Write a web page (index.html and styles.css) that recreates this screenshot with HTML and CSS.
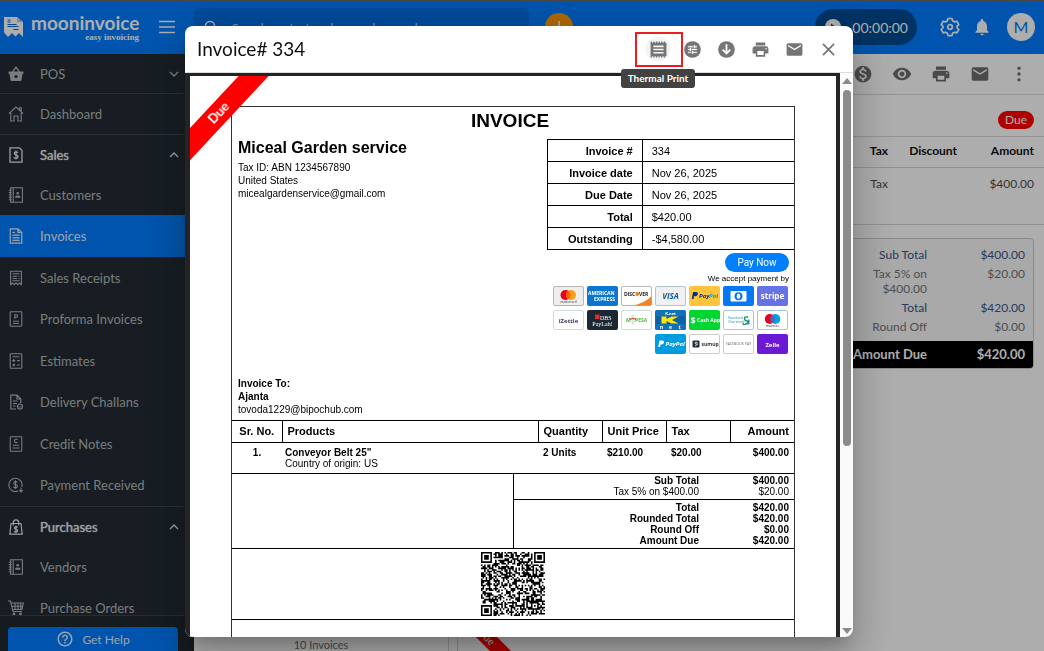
FILE: index.html
```html
<!DOCTYPE html>
<html lang="en">
<head>
<meta charset="utf-8">
<meta name="viewport" content="width=device-width, initial-scale=1">
<title>Invoice# 334</title>
<link rel="stylesheet" href="styles.css">
</head>
<body>
<svg class="sprite" aria-hidden="true">
  <symbol id="i-print" viewBox="0 0 24 24"><path d="M19 8H5c-1.66 0-3 1.34-3 3v6h4v4h12v-4h4v-6c0-1.66-1.34-3-3-3zm-3 11H8v-5h8v5zm3-7c-.55 0-1-.45-1-1s.45-1 1-1 1 .45 1 1-.45 1-1 1zm-1-9H6v4h12V3z"/></symbol>
  <symbol id="i-mail" viewBox="0 0 24 24"><path d="M20 4H4c-1.1 0-1.99.9-1.99 2L2 18c0 1.1.9 2 2 2h16c1.1 0 2-.9 2-2V6c0-1.1-.9-2-2-2zm0 4l-8 5-8-5V6l8 5 8-5v2z"/></symbol>
  <symbol id="i-book" viewBox="0 0 16 16"><g fill="none" stroke="currentColor" stroke-width="1.1"><path d="M2.6 .8H14.4V15.2H2.6zM5.2 .8V15.2M.8 3.2H3.6M.8 5.6H3.6M.8 8H3.6M.8 10.4H3.6M.8 12.8H3.6"/></g><circle cx="9.7" cy="6.3" r="1.3"/><path d="M7.2 10.8V9.6q0-1.2 2.5-1.2t2.5 1.2v1.2z"/></symbol>
  <symbol id="i-up" viewBox="0 0 10 10"><path d="M1 7l4-4 4 4" fill="none" stroke="currentColor" stroke-width="1.4"/></symbol>
  <symbol id="i-down" viewBox="0 0 10 10"><path d="M1 3l4 4 4-4" fill="none" stroke="currentColor" stroke-width="1.4"/></symbol>
</svg>

<header class="topbar">
  <div class="brand">
    <svg class="brand-mark" viewBox="0 0 21 20" aria-hidden="true"><path d="M1 0H14L20 5V20L16 16 12.500 19.500 9 16 5 20 1 15.500z" fill="#fff"/><path d="M14 0V5H20z" fill="#aacdf5"/><path d="M4.500 3h3M4.500 5h3M4.500 7.500h9M4.500 9.500h11M10.500 12.500h5" stroke="#0a66c8" stroke-width="1"/></svg>
    <div class="brand-text"><span class="brand-name">mooninvoice</span><span class="brand-tag">easy invoicing</span></div>
    <button class="bare" aria-label="Menu"><svg width="18" height="14" viewBox="0 0 18 14"><path d="M1 1.500h16M1 7h16M1 12.500h16" stroke="currentColor" stroke-width="1.300"/></svg></button>
  </div>
  <label class="search">
    <svg width="14" height="14" viewBox="0 0 14 14" aria-hidden="true"><circle cx="6" cy="6" r="4.500" fill="none" stroke="currentColor" stroke-width="1.500"/><path d="M9.500 9.500L13 13" stroke="currentColor" stroke-width="1.500"/></svg>
    <input type="text" placeholder="Search contact, order, purchase order" aria-label="Search">
  </label>
  <button class="add" aria-label="Add"><svg width="14" height="14" viewBox="0 0 14 14"><path d="M7 1v12M1 7h12" stroke="#fff" stroke-width="1.600"/></svg></button>
  <div class="top-right">
    <button class="timer"><svg width="16" height="16" viewBox="0 0 16 16" aria-hidden="true"><circle cx="8" cy="8" r="8" fill="#fff"/><path d="M6 4.500l5 3.500-5 3.500z" fill="#004b93"/></svg>00:00:00</button>
    <button class="bare" aria-label="Settings"><svg width="20" height="20" viewBox="0 0 20 20"><path d="M8 1.500h4l.6 2.300 1.900 1.100 2.300-.7 2 3.400-1.700 1.600v1.700l1.700 1.600-2 3.400-2.300-.7-1.900 1.100-.6 2.300H8l-.6-2.300-1.900-1.100-2.300.7-2-3.400 1.700-1.600V9.200L1.200 7.600l2-3.400 2.300.7 1.900-1.100z" fill="none" stroke="currentColor" stroke-width="1.700" stroke-linejoin="round"/><circle cx="10" cy="10" r="2.300" fill="none" stroke="currentColor" stroke-width="1.700"/></svg></button>
    <button class="bare" aria-label="Notifications"><svg width="20" height="20" viewBox="0 0 24 24" fill="currentColor"><path d="M12 22c1.100 0 2-.9 2-2h-4c0 1.100.89 2 2 2zm6-6v-5c0-3.070-1.640-5.640-4.500-6.320V4c0-.83-.67-1.500-1.500-1.500s-1.500.67-1.500 1.500v.68C7.630 5.360 6 7.920 6 11v5l-2 2v1h16v-1l-2-2z"/></svg></button>
    <button class="avatar" aria-label="Account">M</button>
  </div>
</header>

<div class="shell">
  <aside class="sidebar">
    <nav class="nav">
      <a class="group" href="#"><svg viewBox="0 0 16 16"><path d="M.5 5.500h15v2h-.9L13.500 14q-.2 1-1.200 1H3.700q-1 0-1.200-1L1.400 7.500H.5z"/><path d="M4.500 6L8 1.200 11.500 6" fill="none" stroke="currentColor" stroke-width="1.300"/><circle cx="8" cy="10.500" r="1.600" fill="#222c33"/></svg>POS<svg class="chev"><use href="#i-down"/></svg></a>
      <a class="group dash" href="#"><svg viewBox="0 0 16 16"><path d="M.8 7.600L8 1l7.200 6.600M2.800 6.400V15H6V10h4v5h3.200V6.400M11.500 4V1.800h1.700v3.800" fill="none" stroke="currentColor" stroke-width="1.100"/></svg>Dashboard</a>
      <a class="group open" href="#"><svg viewBox="0 0 16 16"><path d="M2 .8H11.500L14 3.500V15.200H2z" fill="none" stroke="currentColor" stroke-width="1.300"/><path d="M10 5.700Q9.500 4.800 8 4.800 6.200 4.800 6.200 6.200T8 7.900 10 9.600 8 11.200 6 10.200M8 3.500v9" fill="none" stroke="currentColor" stroke-width="1.200"/></svg>Sales<svg class="chev"><use href="#i-up"/></svg></a>
      <div class="sub">
        <a href="#"><svg><use href="#i-book"/></svg>Customers</a>
        <a class="active" href="#"><svg viewBox="0 0 16 16"><g fill="none" stroke="currentColor" stroke-width="1.200"><path d="M2.200 .8H10L13.800 4.500V15.200H2.200zM10 .8V4.500H13.800M4.500 4.500H7M4.500 7.200H11.500M4.500 9.800H11.500M4.500 12.400H11.500"/></g></svg>Invoices</a>
        <a href="#"><svg viewBox="0 0 16 16"><path d="M2.600 14.500V1.200H13.400V14.500L11.600 13 9.800 14.500 8 13 6.200 14.500 4.400 13zM4.600 3.800H11.400M4.600 6.200H9M10.300 6.200H11.400M4.600 8.500H9M10.300 8.500H11.400M4.600 10.800H11.400" fill="none" stroke="currentColor" stroke-width="1.100"/></svg>Sales Receipts</a>
        <a href="#"><svg viewBox="0 0 16 16"><path d="M3 .8H13Q13.800.8 13.800 1.600V14.400Q13.800 15.200 13 15.200H3Q2.200 15.200 2.200 14.400V1.600Q2.200.8 3 .8zM6.800 8V3.800H8.400Q9.600 3.800 9.600 5T8.400 6.200H6.800M5 10.200H11M5 12.500H11" fill="none" stroke="currentColor" stroke-width="1.100"/></svg>Proforma Invoices</a>
        <a href="#"><svg viewBox="0 0 16 16"><path d="M3 .8H13Q13.800.8 13.800 1.600V14.400Q13.800 15.200 13 15.200H3Q2.200 15.200 2.200 14.400V1.600Q2.200.8 3 .8zM4.500 3.800H11.500M4.300 7.600H7.300M5.800 6.100V9.100M9 7.600H11.700M4.800 11L6.800 13M6.800 11L4.800 13M9 12H11.700" fill="none" stroke="currentColor" stroke-width="1.100"/></svg>Estimates</a>
        <a href="#"><svg viewBox="0 0 16 16"><path d="M8 15H2.800V1.200H9L12.800 5V9M9 1.200V5H12.800M5 7H9.500M5 9.500H9M5 12H7.500" fill="none" stroke="currentColor" stroke-width="1.200"/><circle cx="12" cy="12.500" r="2.500" fill="none" stroke="currentColor" stroke-width="1.200"/><path d="M10.800 12.500l1 1 1.500-1.700" fill="none" stroke="currentColor" stroke-width=".9"/></svg>Delivery Challans</a>
        <a href="#"><svg viewBox="0 0 16 16"><path d="M3 .8H13Q13.800.8 13.800 1.600V14.400Q13.800 15.200 13 15.200H3Q2.200 15.200 2.200 14.400V1.600Q2.200.8 3 .8zM9.500 4Q9 3.300 8 3.300 6.500 3.300 6.500 5T8 6.700Q9 6.700 9.500 6M5 9.200H11M4.500 12H11.500" fill="none" stroke="currentColor" stroke-width="1.100"/></svg>Credit Notes</a>
        <a href="#"><svg viewBox="0 0 16 16"><path d="M10 14A6.600 6.600 0 1 1 13.800 9.800M9.300 5.500Q8.800 4.500 7.500 4.500 5.800 4.500 5.800 5.900T7.500 7.500 9.300 9.200 7.500 10.700 5.600 9.600M7.500 3.200v8.800M13 10.500V15M11.200 13.200L13 15l1.800-1.800" fill="none" stroke="currentColor" stroke-width="1.100"/></svg>Payment Received</a>
      </div>
      <a class="group open ruled" href="#"><svg viewBox="0 0 16 16"><path d="M3 4.500H13L14.200 15.200H1.800zM5.300 6.500V3.500Q5.300 .8 8 .8T10.700 3.500V6.500M9.600 8.500Q9.200 7.700 8 7.700 6.500 7.700 6.500 8.900T8 10.300 9.600 11.700 8 13 6.400 12M8 6.800V14" fill="none" stroke="currentColor" stroke-width="1.200"/></svg>Purchases<svg class="chev"><use href="#i-up"/></svg></a>
      <div class="sub">
        <a href="#"><svg><use href="#i-book"/></svg>Vendors</a>
        <a href="#"><svg viewBox="0 0 16 16"><path d="M0 1H2.500L5 11.500H14M3 3H15.300L14 9.500H4.600M3.800 6.200H14.700M7 3V9.500M10 3V9.500M12.800 3V9.500" fill="none" stroke="currentColor" stroke-width="1.100"/><circle cx="6" cy="14" r="1.400"/><circle cx="12.500" cy="14" r="1.400"/></svg>Purchase Orders</a>
      </div>
    </nav>
    <div class="help-bar"><button class="help"><svg width="18" height="18" viewBox="0 0 24 24" fill="currentColor" aria-hidden="true"><path d="M11 18h2v-2h-2v2zm1-16C6.480 2 2 6.480 2 12s4.480 10 10 10 10-4.480 10-10S17.520 2 12 2zm0 18c-4.410 0-8-3.590-8-8s3.590-8 8-8 8 3.590 8 8-3.590 8-8 8zm0-14c-2.210 0-4 1.790-4 4h2c0-1.100.9-2 2-2s2 .9 2 2c0 2-3 1.750-3 5h2c0-2.250 3-2.500 3-5 0-2.210-1.790-4-4-4z"/></svg>Get Help</button></div>
  </aside>

  <section class="list-pane"><footer class="list-count">10 Invoices</footer></section>

  <main class="detail">
    <div class="detail-tools">
      <button class="bare" aria-label="Payment"><svg viewBox="0 0 24 24"><path d="M12 2C6.480 2 2 6.480 2 12s4.480 10 10 10 10-4.480 10-10S17.520 2 12 2zm1.410 16.090V20h-2.670v-1.930c-1.710-.36-3.160-1.460-3.270-3.400h1.960c.1 1.050.82 1.870 2.650 1.870 1.960 0 2.400-.98 2.400-1.590 0-.83-.44-1.610-2.670-2.140-2.480-.6-4.180-1.620-4.180-3.670 0-1.720 1.390-2.840 3.110-3.210V4h2.670v1.950c1.860.45 2.790 1.860 2.850 3.390H14.300c-.05-1.110-.64-1.870-2.220-1.870-1.500 0-2.400.68-2.400 1.640 0 .84.65 1.390 2.670 1.910s4.180 1.390 4.180 3.910c-.01 1.830-1.380 2.830-3.120 3.160z"/></svg></button>
      <button class="bare" aria-label="Preview"><svg viewBox="0 0 24 24"><path d="M12 4.500C7 4.500 2.730 7.610 1 12c1.730 4.390 6 7.500 11 7.500s9.270-3.110 11-7.500c-1.730-4.390-6-7.500-11-7.500zM12 17c-2.760 0-5-2.240-5-5s2.240-5 5-5 5 2.240 5 5-2.240 5-5 5zm0-8c-1.660 0-3 1.340-3 3s1.340 3 3 3 3-1.340 3-3-1.340-3-3-3z"/></svg></button>
      <button class="bare" aria-label="Print"><svg><use href="#i-print"/></svg></button>
      <button class="bare" aria-label="Email"><svg><use href="#i-mail"/></svg></button>
      <button class="bare" aria-label="More"><svg viewBox="0 0 24 24"><circle cx="12" cy="5" r="2"/><circle cx="12" cy="12" r="2"/><circle cx="12" cy="19" r="2"/></svg></button>
    </div>
    <div class="detail-status"><span class="due-pill">Due</span></div>
    <table class="lines">
      <colgroup><col><col class="c-discount"><col class="c-amount"></colgroup>
      <thead><tr><th>Tax</th><th>Discount</th><th>Amount</th></tr></thead>
      <tbody><tr><td>Tax</td><td></td><td>$400.00</td></tr></tbody>
    </table>
    <div class="totals-wrap">
      <dl class="totals">
        <div class="strong"><dt>Sub Total</dt><dd>$400.00</dd></div>
        <div><dt>Tax 5% on $400.00</dt><dd>$20.00</dd></div>
        <div class="strong"><dt>Total</dt><dd>$420.00</dd></div>
        <div><dt>Round Off</dt><dd>$0.00</dd></div>
        <div class="due-row"><dt>Amount Due</dt><dd>$420.00</dd></div>
      </dl>
    </div>
    <span class="low-ribbon">Due</span>
  </main>
</div>

<div class="backdrop"></div>

<div class="modal" role="dialog" aria-labelledby="modal-title">
  <div class="modal-head">
    <h1 id="modal-title">Invoice# 334</h1>
    <div class="modal-tools">
      <button class="bare hot" aria-label="Thermal Print"><svg viewBox="0 0 24 24"><path d="M2 3.500V20.500H22V3.500zM5.500 7H18.500V9H5.500zM5.500 11H18.500V13H5.500zM5.500 15H18.500V17H5.500z" fill-rule="evenodd"/><path d="M2 3H22M2 21.200H22" stroke="currentColor" stroke-width="2" stroke-dasharray="1.700 1.630"/></svg></button>
      <button class="bare" aria-label="Customize"><svg viewBox="0 0 24 24"><circle cx="12" cy="12" r="10.500"/><path transform="translate(4.800 4.800) scale(.6)" fill="#fff" d="M3 17v2h6v-2H3zM3 5v2h10V5H3zm10 16v-2h8v-2h-8v-2h-2v6h2zM7 9v2H3v2h4v2h2V9H7zm14 4v-2H11v2h10zm-6-4h2V7h4V5h-4V3h-2v6z" stroke="#fff" stroke-width=".7"/></svg></button>
      <button class="bare" aria-label="Download"><svg viewBox="0 0 24 24"><circle cx="12" cy="12" r="10.500"/><path d="M12 5.500V17M7.200 12.300L12 17.100l4.800-4.800" fill="none" stroke="#fff" stroke-width="2.200"/></svg></button>
      <button class="bare" aria-label="Print"><svg><use href="#i-print"/></svg></button>
      <button class="bare" aria-label="Email"><svg><use href="#i-mail"/></svg></button>
      <button class="bare" aria-label="Close"><svg viewBox="0 0 24 24"><path d="M5 5l14 14M19 5l-14 14" stroke="currentColor" stroke-width="2.200"/></svg></button>
    </div>
    <div class="highlight"></div>
    <div class="tooltip" role="tooltip">Thermal Print</div>
  </div>

  <div class="modal-body">
    <div class="paper">
      <div class="due-ribbon">Due</div>
      <div class="invoice">
        <h2>INVOICE</h2>
        <div class="inv-top">
          <div class="seller">
            <h3>Miceal Garden service</h3>
            <p>Tax ID: ABN 1234567890</p><p>United States</p><p>micealgardenservice@gmail.com</p>
          </div>
          <div class="meta-col">
            <table class="meta">
              <tr><th scope="row">Invoice #</th><td>334</td></tr>
              <tr><th scope="row">Invoice date</th><td>Nov 26, 2025</td></tr>
              <tr><th scope="row">Due Date</th><td>Nov 26, 2025</td></tr>
              <tr><th scope="row">Total</th><td>$420.00</td></tr>
              <tr><th scope="row">Outstanding</th><td>-$4,580.00</td></tr>
            </table>
            <div class="pay">
              <button class="pay-now">Pay Now</button>
              <span class="accept">We accept payment by</span>
              <div class="cards">
                <svg viewBox="0 0 31 20"><rect x=".5" y=".5" width="30" height="19" rx="1.500" fill="#eee" stroke="#b5b5b5"/><circle cx="12.500" cy="9" r="5" fill="#eb001b"/><circle cx="18" cy="9" r="5" fill="#f79e1b"/><path d="M15.250 4.800a5 5 0 0 1 0 8.400 5 5 0 0 1 0-8.400" fill="#ff5f00"/><text x="15.500" y="17" font-size="3" text-anchor="middle" fill="#333">mastercard</text></svg>
                <svg viewBox="0 0 31 20"><rect width="31" height="20" rx="2" fill="#0a76cf"/><g fill="#fff" font-size="5" font-weight="700"><text x="1" y="9">AMERICAN</text><text x="7" y="15">EXPRESS</text></g></svg>
                <svg viewBox="0 0 31 20"><rect x=".5" y=".5" width="30" height="19" rx="1.500" fill="#fff" stroke="#b5b5b5"/><path d="M12 19.500Q25 16.500 30.500 10V18q0 1.500-1.500 1.500z" fill="#f58220"/><g font-size="5" font-weight="700" fill="#222"><text x="3" y="10">DISC</text><text x="18" y="10">VER</text></g><circle cx="16.300" cy="8" r="2" fill="#f58220"/></svg>
                <svg viewBox="0 0 31 20"><rect x=".5" y=".5" width="30" height="19" rx="1.500" fill="#eef0f2" stroke="#b5c3cc"/><text x="15.500" y="13" font-size="8" font-weight="700" font-style="italic" text-anchor="middle" fill="#0e5a9d">VISA</text><path d="M7.500 7.300h2l.8 2.600z" fill="#f2a52b"/></svg>
                <svg viewBox="0 0 31 20"><rect width="31" height="20" rx="2" fill="#ffc439"/><path d="M4 6h3q2.300 0 1.800 2.200T6 10.300H5L4.500 13H2.800z" fill="#003087"/><g font-size="6" font-weight="700" font-style="italic"><text x="10" y="12" fill="#003087">Pay</text><text x="20" y="12" fill="#0a9be0">Pal</text></g></svg>
                <svg viewBox="0 0 31 20"><rect width="31" height="20" rx="2" fill="#0479f5"/><rect x="7.500" y="5" width="16" height="10.500" rx="1" fill="#fff"/><circle cx="15.500" cy="10.200" r="4" fill="#0479f5"/><ellipse cx="15.500" cy="10.200" rx="1.800" ry="2.600" fill="#fff"/></svg>
                <svg viewBox="0 0 31 20"><rect width="31" height="20" rx="2" fill="#6772e5"/><text x="15.500" y="13" font-size="8" font-weight="700" text-anchor="middle" fill="#fff">stripe</text></svg>
              </div>
              <div class="cards">
                <svg viewBox="0 0 31 20"><rect x=".5" y=".5" width="30" height="19" rx="1.500" fill="#fff" stroke="#cdd"/><text x="15.500" y="12.500" font-size="6" font-weight="700" text-anchor="middle" fill="#3c3c5a">iZettle</text></svg>
                <svg viewBox="0 0 31 20"><rect width="31" height="20" rx="2" fill="#1c2733"/><rect x="8" y="4.500" width="4.500" height="4.500" fill="#e52b2b"/><g fill="#fff" font-family="Liberation Serif"><text x="13" y="9.500" font-size="6">DBS</text><text x="15.500" y="15.500" font-size="6" text-anchor="middle">PayLah!</text></g></svg>
                <svg viewBox="0 0 31 20"><rect x=".5" y=".5" width="30" height="19" rx="1.500" fill="#fff" stroke="#cdd"/><g font-size="5" font-weight="700" fill="#56b447"><text x="5" y="11.500">M</text><text x="14" y="11.500">PESA</text></g><rect x="10.500" y="5" width="3" height="9.500" rx=".8" fill="#d7e8d0"/><path d="M9 9.500q3-2 6 0" fill="none" stroke="#d23b3b" stroke-width="1.200"/></svg>
                <svg viewBox="0 0 31 20"><rect width="31" height="20" rx="1.500" fill="#1070b8"/><text x="15.500" y="4.800" font-size="4" font-weight="700" text-anchor="middle" fill="#fff">K-net</text><rect x="1" y="6" width="29" height="8" fill="#0c62a6"/><path d="M6.500 6.500h5v2.500l5-2.500h7l-6.500 3.500 6.500 3.500h-7l-5-2.500v2.500h-5z" fill="#ffe500"/><g font-size="5" font-weight="700" fill="#fff"><text x="5" y="18.700">n</text><text x="14" y="18.700">e</text><text x="23.500" y="18.700">t</text></g></svg>
                <svg viewBox="0 0 31 20"><rect width="31" height="20" rx="2" fill="#00d632"/><text x="1.500" y="13.500" font-size="9" font-weight="700" fill="#fff">$</text><text x="8" y="12" font-size="5" font-weight="700" fill="#fff">Cash App</text></svg>
                <svg viewBox="0 0 31 20"><rect x=".5" y=".5" width="30" height="19" rx="1.500" fill="#fff" stroke="#a9c6d6"/><g font-size="3.500" fill="#2b8bb5"><text x="5" y="9">Standard</text><text x="5" y="13">Chartered</text></g><path d="M25 7q-4-.5-3.500 1.800t3 2.200-1 2.500-3.500-.5" fill="none" stroke="#0b9b5a" stroke-width="1.300"/><path d="M26 9.500v4.500h-3" fill="none" stroke="#1c6dd0"/></svg>
                <svg viewBox="0 0 31 20"><rect x=".5" y=".5" width="30" height="19" rx="1.500" fill="#fff" stroke="#a9c6d6"/><circle cx="12.800" cy="9" r="5" fill="#eb001b"/><circle cx="18.300" cy="9" r="5" fill="#00a2e5"/><path d="M15.550 4.800a5 5 0 0 1 0 8.400 5 5 0 0 1 0-8.400" fill="#6c57a8"/><text x="15.500" y="17.200" font-size="3.500" text-anchor="middle" fill="#333">maestro</text></svg>
              </div>
              <div class="cards">
                <svg viewBox="0 0 31 20"><rect width="31" height="20" rx="2" fill="#009cde"/><path d="M4.500 6.500h3q2 0 1.500 2T6.500 10.500h-1L5 13H3.200z" fill="#fff"/><text x="10.500" y="12.200" font-size="6" font-weight="700" font-style="italic" fill="#fff">PayPal</text></svg>
                <svg viewBox="0 0 31 20"><rect x=".5" y=".5" width="30" height="19" rx="1.500" fill="#fff" stroke="#ccc"/><rect x="3.500" y="6.500" width="7" height="7" rx="1" fill="#222c3a"/><path d="M8.500 8.500Q6 7.500 6 9t2 1-2 2" fill="none" stroke="#fff" stroke-width=".8"/><text x="12.500" y="12" font-size="5" font-weight="700" fill="#333">sumup</text></svg>
                <svg viewBox="0 0 31 20"><rect x=".5" y=".5" width="30" height="19" rx="1.500" fill="#fff" stroke="#ccc"/><text x="15.500" y="11.200" font-size="3.500" text-anchor="middle" fill="#667">FACEBOOK PAY</text></svg>
                <svg viewBox="0 0 31 20"><rect width="31" height="20" rx="2" fill="#6b19d4"/><text x="15.500" y="12.500" font-size="6" font-weight="700" text-anchor="middle" fill="#fff">Zelle</text></svg>
              </div>
            </div>
          </div>
        </div>
        <div class="bill-to"><p><b>Invoice To:</b></p><p><b>Ajanta</b></p><p>tovoda1229@bipochub.com</p></div>
        <table class="items">
          <colgroup><col class="w-sr"><col><col class="w-n"><col class="w-n"><col class="w-n"><col class="w-n"></colgroup>
          <thead><tr><th>Sr. No.</th><th>Products</th><th>Quantity</th><th>Unit Price</th><th>Tax</th><th>Amount</th></tr></thead>
          <tbody><tr><td>1.</td><td>Conveyor Belt 25"<span class="origin">Country of origin: US</span></td><td>2 Units</td><td>$210.00</td><td>$20.00</td><td>$400.00</td></tr></tbody>
        </table>
        <div class="sums-row">
          <div class="sums">
            <dl><div><dt>Sub Total</dt><dd>$400.00</dd></div><div class="light"><dt>Tax 5% on $400.00</dt><dd>$20.00</dd></div></dl>
            <dl class="second"><div><dt>Total</dt><dd>$420.00</dd></div><div><dt>Rounded Total</dt><dd>$420.00</dd></div><div><dt>Round Off</dt><dd>$0.00</dd></div><div><dt>Amount Due</dt><dd>$420.00</dd></div></dl>
          </div>
        </div>
        <div class="qr-row"><svg id="qr" width="64" height="64" viewBox="0 0 41 41" role="img" aria-label="Payment QR code"></svg></div>
      </div>
    </div>
    <div class="scroll" aria-hidden="true"><i class="arrow up"></i><i class="thumb"></i><i class="arrow down"></i></div>
  </div>
</div>
<script src="script.js"></script>
</body>
</html>
```
FILE: styles.css
```css
* { box-sizing: border-box; }
body {
  margin: 0;
  height: 100vh;
  overflow: hidden;
  display: flex;
  flex-direction: column;
  font-family: Lato, "Open Sans", sans-serif;
  font-size: 13px;
  background: #fff;
}
h1, h2, h3, p, dl, dt, dd { margin: 0; }
button { font: inherit; cursor: pointer; }
.sprite { position: absolute; width: 0; height: 0; }
.bare { border: 0; padding: 0; background: none; color: inherit; display: flex; align-items: center; justify-content: center; }

/* Top bar */
.topbar {
  flex: none;
  height: 54px;
  border-top: 2px solid #6b6b6b;
  background: #007dff;
  color: #fff;
  display: flex;
  align-items: center;
  padding: 0 9px 2px 0;
}
.brand { width: 194px; display: flex; align-items: center; padding-left: 3px; }
.brand-mark { width: 21px; height: 20px; }
.brand-text { display: flex; flex-direction: column; width: 108px; margin: 0 19px 0 7px; }
.brand-name { font-size: 19px; line-height: 19px; font-weight: 700; }
.brand-tag { font: 700 9px/10px "Liberation Serif", serif; text-align: right; }
.search {
  flex: 0 1 335px;
  height: 39px;
  padding-left: 10px;
  display: flex;
  align-items: center;
  gap: 14px;
  border-radius: 5px;
  background: #006de4;
}
.search input { flex: 1; min-width: 0; padding: 0; border: 0; background: none; color: #fff; font: 12px Lato, sans-serif; outline: 0; }
.search input::placeholder { color: #c4dbf5; opacity: 1; }
.add { width: 28px; height: 28px; margin-left: 16px; padding: 0; border: 0; border-radius: 50%; background: #ff9a00; display: grid; place-items: center; }
.top-right { margin-left: auto; display: flex; align-items: center; }
.timer { width: 102px; height: 36px; margin-right: 23px; padding: 0 9px 0 10px; border: 0; border-radius: 18px; background: #004b93; color: #fff; font-size: 14px; display: flex; align-items: center; justify-content: space-between; }
.top-right .bare + .bare { margin: 0 15px 0 12px; }
.avatar { width: 28px; height: 28px; padding: 0; border: 0; border-radius: 50%; background: #fff; color: #0078f0; font-size: 16px; line-height: 28px; }

/* Page columns */
.shell { flex: 1; min-height: 0; display: flex; }
.sidebar { flex: 0 0 194px; display: flex; flex-direction: column; background: #222c33; color: #b4b8ba; }
.nav { flex: 1; min-height: 0; overflow: hidden; fill: currentColor; }
.nav a { display: flex; align-items: center; gap: 16px; padding: 0 15px 0 8px; color: inherit; text-decoration: none; }
.nav svg { flex: none; width: 16px; height: 16px; }
.nav .chev { width: 10px; height: 10px; margin-left: auto; }
.group { height: 39px; }
.nav .dash { height: 42px; border: solid #3f484e; border-width: 1px 0; }
.nav .ruled { height: 40px; border-top: 1px solid #3f484e; }
.nav .open { color: #e8eaeb; text-shadow: 0 0 1px currentColor; }
.sub a { height: 41px; }
.sub a:nth-child(even) { height: 42px; }
.sub .active { background: #007dff; color: #e4effb; }
.help-bar { flex: none; height: 36px; padding: 11px 16px 0 8px; border-top: 1px solid #3a4349; background: #20282f; }
.help { width: 100%; height: 24px; padding: 0; border: 0; border-radius: 4px 4px 0 0; background: #007dff; color: #e4effb; font-size: 12px; display: flex; align-items: center; justify-content: center; gap: 8px; }

.list-pane { flex: 0 0 255px; display: flex; flex-direction: column; justify-content: flex-end; border-right: 1px solid #d5d5d5; }
.list-count { height: 12px; line-height: 12px; font-size: 11px; color: #6c6c6c; text-align: center; }

.detail { position: relative; flex: 1; margin-left: 8px; border-left: 1px solid #d5d5d5; overflow: hidden; }
.detail-tools { height: 41px; padding-right: 6px; display: flex; align-items: center; justify-content: flex-end; border-bottom: 1px solid #d9d9d9; color: #6e6e6e; fill: currentColor; }
.detail-tools .bare { width: 39px; }
.detail-tools svg { width: 20px; height: 20px; }
.detail-status { height: 42px; padding: 16px 10px 0 0; display: flex; justify-content: flex-end; border-bottom: 1px solid #d9d9d9; }
.due-pill { width: 36px; height: 18px; line-height: 18px; border-radius: 9px; background: #ff0000; color: #fff; font-size: 12px; text-align: center; }
.lines { width: 100%; table-layout: fixed; border-collapse: collapse; text-align: right; font-size: 12px; }
.lines th { height: 30px; padding: 0 0 2px; border-bottom: 1px solid #d5d5d5; text-align: right; color: #111; }
.lines td { height: 57px; padding: 8px 0 0; border-bottom: 1px solid #d5d5d5; vertical-align: top; color: #4c4c4c; }
.lines th:last-child, .lines td:last-child { padding-right: 10px; }
.c-discount { width: 69px; }
.c-amount { width: 87px; }
.totals-wrap { padding: 13px 10px 0; display: flex; justify-content: flex-end; }
.totals { width: 240px; border: 1px solid #ccc; border-radius: 4px; overflow: hidden; background: #f9f9f9; padding-top: 6px; color: #757575; font-size: 12px; line-height: 15px; }
.totals div { display: grid; grid-template-columns: 1fr 98px; padding: 2px 8px 2px 0; text-align: right; }
.totals dt { justify-self: end; max-width: 60px; }
.totals .strong { color: #40548a; }
.totals .due-row { margin-top: 5px; padding: 6px 8px 6px 0; background: #000; color: #fff; font-size: 13px; font-weight: 700; }
.totals .due-row dt { max-width: none; }
.low-ribbon { position: absolute; left: -14px; bottom: -11px; width: 120px; height: 15px; transform: rotate(45deg); background: #ff0000; color: #fff; font-size: 10px; line-height: 15px; padding-left: 26px; }

/* Dialog */
.backdrop { position: fixed; inset: 0; background: rgba(0, 0, 0, .32); }
.modal {
  position: fixed;
  inset: 26px 191px 14px 185px;
  display: flex;
  flex-direction: column;
  border-radius: 8px;
  background: #fff;
  box-shadow: 0 11px 15px -7px rgba(0, 0, 0, .2), 0 24px 38px 3px rgba(0, 0, 0, .14), 0 9px 46px 8px rgba(0, 0, 0, .12);
}
.modal-head { position: relative; flex: none; height: 47px; padding: 0 8px 0 12px; display: flex; align-items: center; justify-content: space-between; border-bottom: 1px solid #ddd; }
.modal-head h1 { font-size: 19px; line-height: 24px; font-weight: 400; color: #111; }
.modal-tools { display: flex; color: #757575; fill: currentColor; }
.modal-tools .bare { width: 34px; height: 26px; }
.modal-tools svg { width: 19px; height: 19px; }
.modal-tools .hot { background: radial-gradient(circle, #f3f3f3 12px, transparent 13px); }
.highlight { position: absolute; right: 170px; top: 6px; width: 48px; height: 35px; border: 2px solid #ec1c24; }
.tooltip { position: absolute; z-index: 2; right: 158px; top: 43px; width: 74px; height: 19px; border-radius: 3px; background: #424242; color: #fff; font-size: 10px; line-height: 19px; font-weight: 700; text-align: center; }
.modal-body { flex: 1; min-height: 0; display: flex; overflow: hidden; border-radius: 0 0 8px 8px; background: #242424; }
.paper { position: relative; flex: 1; margin: 3px 4px 0 5px; padding: 30px 41px 0; overflow: hidden; background: #fff; }
.due-ribbon { position: absolute; left: -39px; top: 24px; width: 140px; height: 22px; transform: rotate(-47deg); background: #ff0000; color: #fff; text-align: center; font-size: 13px; line-height: 21px; font-weight: 700; padding-right: 6px; }
.scroll { flex: none; width: 13px; padding: 5px 0 3px; display: flex; flex-direction: column; align-items: center; background: #fafafa; }
.arrow { border: solid transparent; border-width: 0 5px; }
.arrow.up { border-bottom: 6px solid #8b8b8b; }
.arrow.down { margin-top: auto; border-top: 6px solid #8b8b8b; }
.thumb { width: 8px; height: 64%; margin-top: 6px; border-radius: 4px; background: #8b8b8b; }

/* Invoice sheet */
.invoice { min-height: 620px; border: 1px solid #333; color: #000; font-family: "Liberation Sans", Arial, sans-serif; font-size: 10px; line-height: 13px; }
.invoice h2 { height: 32px; padding-top: 3px; font-size: 19px; line-height: 22px; text-align: center; padding-right: 6px; }
.inv-top { display: flex; justify-content: space-between; }
.seller { padding-left: 6px; }
.seller h3 { font-size: 16px; line-height: 18px; margin-bottom: 4px; }
.meta-col { width: 44%; }
.meta { width: 100%; border-collapse: collapse; font-size: 11px; }
.meta th, .meta td { height: 22px; padding: 1px 9px 0; border: 1px solid #000; }
.meta th { width: 95px; text-align: right; }
.meta tr > :last-child { border-right: 0; }
.pay { display: flex; flex-direction: column; align-items: flex-end; padding: 3px 5px 0 0; }
.pay-now { width: 64px; height: 19px; padding: 0; border: 0; border-radius: 10px; background: #0080ff; color: #fff; font: 10px/19px Roboto, sans-serif; }
.accept { font-size: 8px; line-height: 10px; margin: 2px 0; }
.cards { display: flex; gap: 3px; margin: 0 1px 4px 0; font-family: "Open Sans", sans-serif; }
.cards svg { width: 31px; height: 20px; }
.bill-to { padding: 19px 6px 4px; }
.items { width: 100%; table-layout: fixed; border-collapse: collapse; border: solid #000; border-width: 1px 0; }
.w-sr { width: 50px; }
.w-n { width: 64px; }
.items th { height: 22px; padding: 0 5px; border-bottom: 1px solid #000; border-right: 1px solid #000; font-size: 11px; text-align: left; white-space: nowrap; }
.items td { height: 31px; padding: 4px 5px 0 3px; vertical-align: top; line-height: 11px; font-weight: 700; }
.items td:nth-child(n+3) { padding-left: 5px; }
.items th:first-child, .items td:first-child { padding: 4px 0 0; text-align: center; }
.items th:first-child { padding: 0; }
.items th:last-child, .items td:last-child { border-right: 0; text-align: right; }
.origin { display: block; font-weight: 400; }
.sums-row { display: flex; justify-content: flex-end; border-bottom: 1px solid #000; }
.sums { width: 50%; border-left: 1px solid #000; line-height: 11px; font-weight: 700; text-align: right; }
.sums dl { padding: 1px 5px 2px; }
.sums .second { padding-top: 2px; border-top: 1px solid #000; }
.sums dl div { display: grid; grid-template-columns: 1fr 90px; }
.light { font-weight: 400; }
.qr-row { height: 71px; padding-top: 3px; text-align: center; border-bottom: 1px solid #000; }
```
FILE: script.js
```javascript
// Fills the QR symbol: three finder squares, one alignment square, data modules between them.
const size = 41;
let seed = 334;
const next = () => (seed = (seed * 1103515245 + 12345) % 2147483648) / 2147483648;
const ring = (x, y, cx, cy, outer) => {
  const d = Math.max(Math.abs(x - cx), Math.abs(y - cy));
  if (d > outer + 1) return null;
  return outer === 3 ? d !== 2 && d !== 4 : d !== 1 && d <= 2;
};
let path = "";
for (let y = 0; y < size; y++) {
  for (let x = 0; x < size; x++) {
    const marks = [ring(x, y, 3, 3, 3), ring(x, y, 37, 3, 3), ring(x, y, 3, 37, 3), Math.max(Math.abs(x - 34), Math.abs(y - 34)) <= 2 ? ring(x, y, 34, 34, 2) : null];
    const mark = marks.find((m) => m !== null);
    const noise = next() > 0.48;
    if (mark === undefined ? noise : mark) path += `M${x} ${y}h1v1h-1z`;
  }
}
const shape = document.createElementNS("http://www.w3.org/2000/svg", "path");
shape.setAttribute("d", path);
document.getElementById("qr").append(shape);
```
